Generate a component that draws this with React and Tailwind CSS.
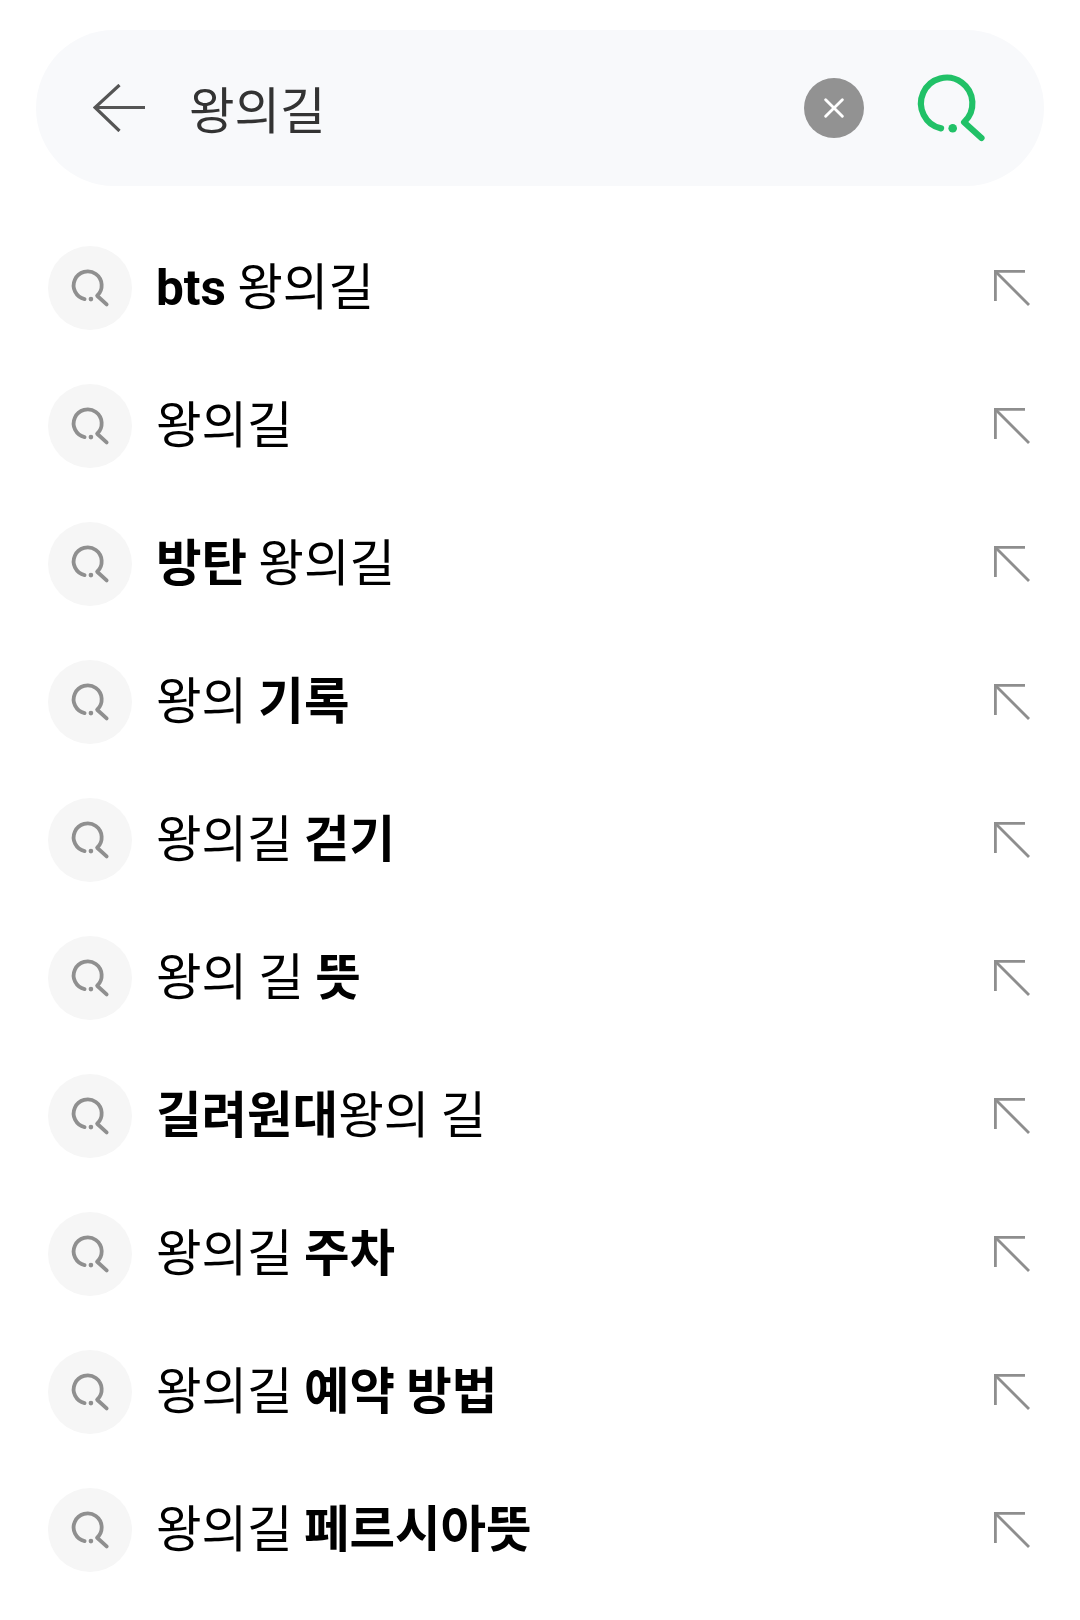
const rows = [
  [['b', 'bts'], ['r', ' 왕의길']],
  [['r', '왕의길']],
  [['b', '방탄'], ['r', ' 왕의길']],
  [['r', '왕의 '], ['b', '기록']],
  [['r', '왕의길 '], ['b', '걷기']],
  [['r', '왕의 길 '], ['b', '뜻']],
  [['b', '길려원대'], ['r', '왕의 길']],
  [['r', '왕의길 '], ['b', '주차']],
  [['r', '왕의길 '], ['b', '예약 방법']],
  [['r', '왕의길 '], ['b', '페르시아뜻']],
]

function SearchGlyph({ className, strokeWidth = 6.2 }) {
  return (
    <svg viewBox="0 0 66 66" fill="none" stroke="currentColor" strokeLinecap="round" strokeLinejoin="round" className={`overflow-visible ${className}`}>
      <path d="M23.05 53.37A25.7 25.7 0 1 1 46.1 47.2L63.5 63" strokeWidth={strokeWidth} />
      <circle cx="34.7" cy="53.3" r="4.3" fill="currentColor" stroke="none" />
    </svg>
  )
}

function Row({ parts }) {
  return (
    <div className="flex h-[138px] items-center pl-[48px] pr-[50px]">
      <div className="flex h-[84px] w-[84px] shrink-0 items-center justify-center rounded-full bg-[#f6f6f6]">
        <SearchGlyph className="h-[36px] w-[36px] text-[#8f8f8f]" strokeWidth={7} />
      </div>
      <p className="ml-[24px] flex-1 translate-y-px whitespace-pre text-[49.5px] leading-none tracking-normal text-black [word-spacing:-1px]">
        {parts.map(([kind, text], i) => (
          <span key={i} className={kind === 'b' ? 'font-bold' : 'font-normal'}>
            {text}
          </span>
        ))}
      </p>
      <svg viewBox="0 0 36 36" fill="none" stroke="#8e8e8e" strokeWidth="2.8" className="h-[36px] w-[36px] shrink-0">
        <path d="M1.4 31V1.4H31" />
        <path d="M1.5 1.5L35 35" />
      </svg>
    </div>
  )
}

export default function App() {
  return (
    <main className="min-h-[1620px] w-[1080px] bg-white pt-[30px] font-['Roboto','Noto_Sans_CJK_KR',sans-serif]">
      <div className="mx-[36px] mb-[33px] flex h-[156px] items-center rounded-full bg-[#f8f9fb] pl-[57px] pr-[60px]">
        <svg viewBox="0 0 52 48" fill="none" stroke="#555555" strokeWidth="3.2" className="h-[48px] w-[52px] shrink-0">
          <path d="M52 23.5H2" />
          <path d="M26.5 1L2 23.5L26.5 47" />
        </svg>
        <p className="ml-[44px] flex-1 translate-y-[5px] text-[49.5px] leading-none text-[#333333]">왕의길</p>
        <div className="mr-[54px] flex h-[60px] w-[60px] items-center justify-center rounded-full bg-[#929292]">
          <svg viewBox="0 0 24 24" fill="none" stroke="#ffffff" strokeWidth="3.4" strokeLinecap="round" className="h-[20px] w-[20px]">
            <path d="M2 2L22 22M22 2L2 22" />
          </svg>
        </div>
        <SearchGlyph className="h-[66px] w-[66px] text-[#21c167]" />
      </div>
      {rows.map((parts, i) => (
        <Row key={i} parts={parts} />
      ))}
    </main>
  )
}
